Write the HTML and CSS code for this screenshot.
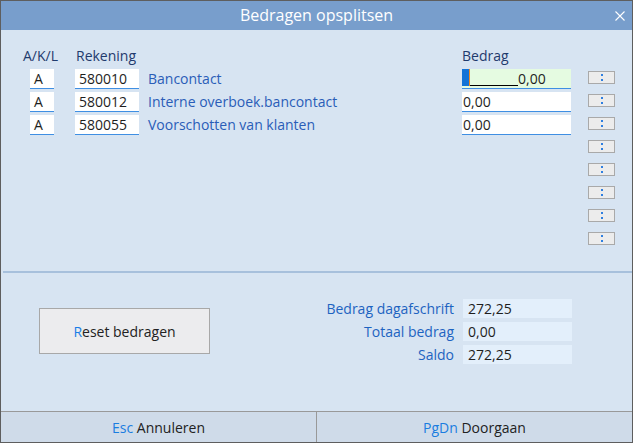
FILE: index.html
```html
<!DOCTYPE html>
<html>
<head>
<meta charset="utf-8">
<link rel="stylesheet" href="styles.css">
</head>
<body>
<div class="window">
  <div class="titlebar">
    <span class="title">Bedragen opsplitsen</span>
    <svg class="close" width="10" height="10" viewBox="0 0 10 10"><path d="M0.5 0.5 L9.5 9.5 M9.5 0.5 L0.5 9.5" stroke="#fff" stroke-width="1.1"/></svg>
  </div>
  <div class="upper">
    <div class="row head">
      <div class="c-akl hdr">A/K/L</div>
      <div class="c-rek hdr">Rekening</div>
      <div class="c-desc"></div>
      <div class="c-amt hdr">Bedrag</div>
    </div>
    <div class="row">
      <div class="c-akl fld">A</div>
      <div class="c-rek fld">580010</div>
      <div class="c-desc desc">Bancontact</div>
      <div class="c-amt fld active"><span class="cursor"></span><span class="mask"></span><span class="val">0,00</span></div>
      <div class="btn"><i></i><i></i></div>
    </div>
    <div class="row">
      <div class="c-akl fld">A</div>
      <div class="c-rek fld">580012</div>
      <div class="c-desc desc">Interne overboek.bancontact</div>
      <div class="c-amt fld amt">0,00</div>
      <div class="btn"><i></i><i></i></div>
    </div>
    <div class="row">
      <div class="c-akl fld">A</div>
      <div class="c-rek fld">580055</div>
      <div class="c-desc desc">Voorschotten van klanten</div>
      <div class="c-amt fld amt">0,00</div>
      <div class="btn"><i></i><i></i></div>
    </div>
    <div class="row"><div class="btn"><i></i><i></i></div></div>
    <div class="row"><div class="btn"><i></i><i></i></div></div>
    <div class="row"><div class="btn"><i></i><i></i></div></div>
    <div class="row"><div class="btn"><i></i><i></i></div></div>
    <div class="row"><div class="btn"><i></i><i></i></div></div>
  </div>
  <div class="sep"></div>
  <div class="lower">
    <div class="reset"><span class="hot">R</span>eset bedragen</div>
    <div class="summary">
      <div class="slabel">Bedrag dagafschrift</div><div class="sval">272,25</div>
      <div class="slabel">Totaal bedrag</div><div class="sval">0,00</div>
      <div class="slabel">Saldo</div><div class="sval">272,25</div>
    </div>
  </div>
  <div class="footer">
    <div class="fbtn"><span class="key">Esc</span>&nbsp;Annuleren</div>
    <div class="fbtn divider"><span class="key">PgDn</span>&nbsp;Doorgaan</div>
  </div>
</div>
</body>
</html>
```
FILE: styles.css
```css
* { box-sizing: border-box; }
html, body { margin: 0; padding: 0; }
body {
  font-family: "Open Sans", "Noto Sans", sans-serif;
  font-size: 14px;
  color: #1e1e1e;
  background: #fff;
}
.window {
  width: 633px;
  height: 443px;
  border: 1px solid #5e5e5e;
  background: #d7e4f2;
  display: flex;
  flex-direction: column;
}
.titlebar {
  height: 29px;
  background: #789ecc;
  display: flex;
  align-items: center;
  justify-content: center;
  position: relative;
  flex: none;
}
.title {
  color: #fff;
  font-size: 16px;
  line-height: 29px;
}
.close {
  position: absolute;
  right: 7px;
  top: 10px;
}
.upper {
  height: 241px;
  flex: none;
  padding: 16px 0 0 29px;
}
.row {
  width: 585px;
  height: 20px;
  margin-bottom: 3px;
  display: flex;
  align-items: flex-start;
}
.row.head { height: 20px; }
.c-akl { width: 24px; flex: none; }
.c-rek { width: 64px; margin-left: 21px; flex: none; }
.c-desc { width: 314px; margin-left: 9px; flex: none; }
.c-amt { width: 109px; flex: none; }
.hdr {
  color: #1f3a6d;
  line-height: 20px;
  white-space: nowrap;
}
.c-akl.hdr { margin-left: -7px; width: 35px; }
.c-rek.hdr { padding-left: 1px; margin-left: 17px; }
.c-amt.hdr { padding-left: 0; }
.fld {
  height: 20px;
  background: #fff;
  border-bottom: 1px solid #3f8fe3;
  line-height: 19px;
  padding-left: 4px;
  white-space: nowrap;
}
.desc {
  color: #2a5db8;
  line-height: 20px;
  white-space: nowrap;
}
.amt { padding-left: 1px; }
.active {
  background: #e5fbe1;
  padding-left: 0;
  display: flex;
  align-items: flex-start;
}
.cursor {
  width: 8px;
  height: 17px;
  background: #1473d6;
  border-right: 1px solid #f08a24;
  flex: none;
}
.mask {
  width: 48px;
  height: 17px;
  border-bottom: 1px solid #000;
  flex: none;
}
.val { line-height: 19px; }
.btn {
  margin-left: auto;
  margin-top: 2px;
  width: 27px;
  height: 13px;
  background: #ececec;
  border: 1px solid #a9a9a9;
  display: flex;
  flex-direction: column;
  align-items: center;
  justify-content: center;
  gap: 3px;
}
.btn i {
  display: block;
  width: 2px;
  height: 2px;
  background: #2f7fe0;
}
.sep {
  height: 2px;
  margin-left: 2px;
  background: #a7c0dc;
  flex: none;
}
.lower {
  height: 138px;
  flex: none;
  display: flex;
  align-items: flex-start;
}
.reset {
  margin-left: 38px;
  margin-top: 35px;
  width: 171px;
  height: 46px;
  background: #ececee;
  border: 1px solid #a8a8a8;
  display: flex;
  align-items: center;
  justify-content: center;
  color: #222;
}
.hot { color: #1a7de6; }
.summary {
  margin-left: auto;
  margin-right: 60px;
  margin-top: 26px;
  display: grid;
  grid-template-columns: auto 109px;
  column-gap: 9px;
  row-gap: 4px;
}
.slabel {
  color: #1d63c1;
  text-align: right;
  line-height: 19px;
  white-space: nowrap;
}
.sval {
  height: 19px;
  background: #e3effb;
  line-height: 19px;
  padding-left: 5px;
}
.footer {
  flex: 1;
  border-top: 1px solid #999;
  background: #cfdbe9;
  display: flex;
}
.fbtn {
  flex: 1;
  display: flex;
  align-items: center;
  justify-content: center;
  color: #222;
}
.divider { border-left: 1px solid #999; }
.key { color: #1a7de0; }
```
